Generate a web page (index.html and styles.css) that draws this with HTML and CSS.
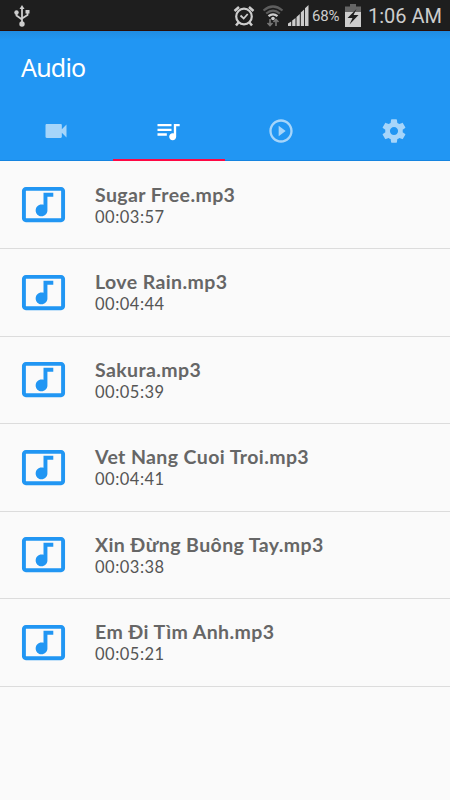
FILE: index.html
```html
<!DOCTYPE html>
<html lang="en">
<head>
    <meta charset="UTF-8">
    <meta name="viewport" content="width=device-width, initial-scale=1.0">
    <title>Audio</title>
    <link rel="stylesheet" href="styles.css">
</head>
<body>
    <svg class="sprite">
        <symbol id="music-video" viewBox="0 0 24 24">
            <path d="M21 3H3c-1.11 0-2 .89-2 2v14c0 1.1.89 2 2 2h18c1.1 0 2-.9 2-2V5c0-1.11-.9-2-2-2zm0 16H3V5h18v14zM8 15c0-1.66 1.34-3 3-3 .35 0 .69.07 1 .18V6h5v2h-3v7.03c-.02 1.64-1.35 2.97-3 2.97-1.66 0-3-1.34-3-3z"/>
        </symbol>
    </svg>

    <div class="status-bar">
        <svg class="usb" viewBox="0 0 16 24">
            <path d="M8 4v15M2.5 8v3.5L8 15.5M13.5 7.5V11L8 14.5" fill="none" stroke="currentColor" stroke-width="1.8"/>
            <path d="M8 1l2.5 4h-5z"/>
            <circle cx="2.5" cy="8.5" r="2.2"/>
            <path d="M11.5 6h4v3.500h-4z"/>
            <circle cx="8" cy="20" r="2.7"/>
        </svg>
        <div class="status-right">
            <svg class="alarm" viewBox="0 0 22 22">
                <g fill="none" stroke="currentColor" stroke-width="2.2">
                    <circle cx="11" cy="11.5" r="7.8"/>
                    <path d="M7.5 10.500l3.200 3 4-4.500" stroke-width="1.8"/>
                    <path d="M5.500 17.500L3 20.500M16.500 17.500l2.500 3M1.500 6l4.500-4M20.500 6L16 2" stroke-width="2.5"/>
                </g>
            </svg>
            <svg class="wifi" viewBox="0 0 22 22">
                <g fill="none" stroke-width="2.2">
                    <path d="M1.500 5.500Q11-2.500 20.500 5.500M4.200 8.500Q11 2.700 17.800 8.500" stroke="#5e5e5e"/>
                    <path d="M6.500 11.200q4.500-3.800 9 0" stroke="currentColor"/>
                </g>
                <circle cx="11" cy="13.500" r="1.800"/>
                <path d="M8 14v6.500M5.500 18L8 20.500l2.500-2.500M14 21v-6.500M11.500 17l2.500-2.500 2.500 2.500" fill="none" stroke="#777" stroke-width="1.600"/>
            </svg>
            <svg class="signal" viewBox="0 0 21 22">
                <path d="M0 21v-2.500l3.200-2V21zM4.200 21v-5.500l3.300-2.500v8zM8.500 21v-9l3.300-3v12zM12.800 21V7.500l3.300-3V21zM17 21V3.200L20.500 0v21z"/>
            </svg>
            <span class="percent">68%</span>
            <svg class="battery" viewBox="0 0 16 23">
                <path d="M5 0h6v2.500h5V8H0V2.500h5z" fill="#666"/>
                <path d="M0 8h16v15H0z"/>
                <path d="M11.500 5L2.500 14h5l-3 6.500 9-9.500h-5z" fill="#1e1e1e"/>
            </svg>
            <span class="clock">1:06 AM</span>
        </div>
    </div>

    <header class="app-bar">
        <h1 class="title">Audio</h1>
        <nav class="tabs">
            <a class="tab">
                <svg viewBox="0 0 24 24"><path d="M17 10.500V7c0-.55-.45-1-1-1H4c-.55 0-1 .45-1 1v10c0 .55.45 1 1 1h12c.55 0 1-.45 1-1v-3.500l4 4v-11l-4 4z"/></svg>
            </a>
            <a class="tab active">
                <svg viewBox="0 0 24 24"><path d="M15 6H3v2h12V6zm0 4H3v2h12v-2zM3 16h8v-2H3v2zM17 6v8.180c-.31-.11-.65-.18-1-.18-1.660 0-3 1.340-3 3s1.340 3 3 3 3-1.340 3-3V8h3V6h-5z"/></svg>
            </a>
            <a class="tab">
                <svg viewBox="0 0 24 24"><path d="M10 16.500l6-4.500-6-4.500v9zM12 2C6.480 2 2 6.480 2 12s4.480 10 10 10 10-4.480 10-10S17.520 2 12 2zm0 18c-4.410 0-8-3.590-8-8s3.590-8 8-8 8 3.590 8 8-3.590 8-8 8z"/></svg>
            </a>
            <a class="tab">
                <svg viewBox="0 0 24 24"><path d="M19.430 12.980c.04-.32.07-.64.07-.98s-.03-.66-.07-.98l2.110-1.650c.19-.15.24-.42.12-.64l-2-3.460c-.12-.22-.39-.3-.61-.22l-2.490 1c-.52-.4-1.080-.73-1.690-.98l-.38-2.650C14.460 2.180 14.250 2 14 2h-4c-.25 0-.46.18-.49.42l-.38 2.650c-.61.25-1.170.59-1.690.98l-2.490-1c-.23-.09-.49 0-.61.22l-2 3.460c-.13.22-.07.49.12.64l2.110 1.650c-.04.32-.07.65-.07.98s.03.66.07.98l-2.110 1.650c-.19.15-.24.42-.12.64l2 3.460c.12.22.39.3.61.22l2.490-1c.52.4 1.080.73 1.690.98l.38 2.650c.03.24.24.42.49.42h4c.25 0 .46-.18.49-.42l.38-2.650c.61-.25 1.170-.59 1.690-.98l2.490 1c.23.09.49 0 .61-.22l2-3.460c.12-.22.07-.49-.12-.64l-2.110-1.650zM12 15.500c-1.930 0-3.500-1.570-3.500-3.500s1.570-3.500 3.500-3.500 3.500 1.570 3.500 3.500-1.570 3.500-3.500 3.500z"/></svg>
            </a>
        </nav>
    </header>

    <ul class="songs">
        <li class="song">
            <svg class="song-icon"><use href="#music-video"/></svg>
            <div class="song-info">
                <div class="song-name">Sugar Free.mp3</div>
                <div class="song-time">00:03:57</div>
            </div>
        </li>
        <li class="song">
            <svg class="song-icon"><use href="#music-video"/></svg>
            <div class="song-info">
                <div class="song-name">Love Rain.mp3</div>
                <div class="song-time">00:04:44</div>
            </div>
        </li>
        <li class="song">
            <svg class="song-icon"><use href="#music-video"/></svg>
            <div class="song-info">
                <div class="song-name">Sakura.mp3</div>
                <div class="song-time">00:05:39</div>
            </div>
        </li>
        <li class="song">
            <svg class="song-icon"><use href="#music-video"/></svg>
            <div class="song-info">
                <div class="song-name">Vet Nang Cuoi Troi.mp3</div>
                <div class="song-time">00:04:41</div>
            </div>
        </li>
        <li class="song">
            <svg class="song-icon"><use href="#music-video"/></svg>
            <div class="song-info">
                <div class="song-name">Xin Đừng Buông Tay.mp3</div>
                <div class="song-time">00:03:38</div>
            </div>
        </li>
        <li class="song">
            <svg class="song-icon"><use href="#music-video"/></svg>
            <div class="song-info">
                <div class="song-name">Em Đi Tìm Anh.mp3</div>
                <div class="song-time">00:05:21</div>
            </div>
        </li>
    </ul>
</body>
</html>
```

FILE: styles.css
```css
:root {
    --primary: #2196f3;
    --accent: #ff0844;
    --background: #fafafa;
    --status: #cdcdcd;
}

* {
    margin: 0;
    padding: 0;
    box-sizing: border-box;
}

body {
    background: var(--background);
    font-family: Roboto, sans-serif;
    min-height: 100vh;
    overflow: hidden;
}

svg {
    display: block;
    fill: currentColor;
    flex-shrink: 0;
}

.sprite {
    display: none;
}

.status-bar {
    display: flex;
    justify-content: space-between;
    align-items: center;
    height: 31px;
    padding: 1px 8px 0 14px;
    background: #1e1e1e;
    border-bottom: 1px solid #2a0e08;
    color: var(--status);
}

.status-right {
    display: flex;
    align-items: center;
}

.usb {
    width: 16px;
    height: 24px;
}

.alarm {
    width: 22px;
    height: 22px;
    margin-right: 7px;
}

.wifi {
    width: 22px;
    height: 22px;
    margin-right: 4px;
}

.signal {
    width: 21px;
    height: 22px;
    margin-right: 3px;
}

.percent {
    width: 28px;
    margin-right: 5px;
    font-size: 15px;
    letter-spacing: -0.2px;
    white-space: nowrap;
}

.battery {
    width: 16px;
    height: 23px;
    margin-right: 7px;
}

.clock {
    font-size: 20px;
    white-space: nowrap;
}

.app-bar {
    height: 130px;
    background: linear-gradient(#208ce2, var(--primary) 9px);
    box-shadow: inset 0 -1px #1584e0;
    color: #fff;
}

.title {
    height: 71px;
    padding-left: 21px;
    font-family: "Noto Sans", sans-serif;
    font-size: 25px;
    font-weight: 400;
    letter-spacing: -0.8px;
    line-height: 72px;
}

.tabs {
    display: grid;
    grid-template-columns: repeat(4, 1fr);
    height: 59px;
}

.tab {
    display: flex;
    justify-content: center;
    align-items: center;
    padding-top: 1px;
    border-bottom: 2px solid transparent;
    color: #a6d5fa;
}

.tab svg {
    width: 28px;
    height: 28px;
}

.tab.active {
    padding-right: 2px;
    border-color: var(--accent);
    color: #fff;
}

.songs {
    padding-top: 0.5px;
    list-style: none;
}

.song {
    display: flex;
    align-items: center;
    height: 87.5px;
    padding-left: 20px;
    border-bottom: 1px solid #dcdcdc;
}

.song-icon {
    width: 47px;
    height: 47px;
    margin-right: 28px;
    color: var(--primary);
}

.song-info {
    padding-top: 3px;
    font-family: Lato, sans-serif;
    white-space: nowrap;
}

.song-name {
    color: #666;
    font-size: 19.5px;
    font-weight: 700;
    letter-spacing: 0.4px;
    line-height: 22px;
}

.song-time {
    color: #555;
    font-size: 16.5px;
    letter-spacing: 0.5px;
    line-height: 23px;
}
```
